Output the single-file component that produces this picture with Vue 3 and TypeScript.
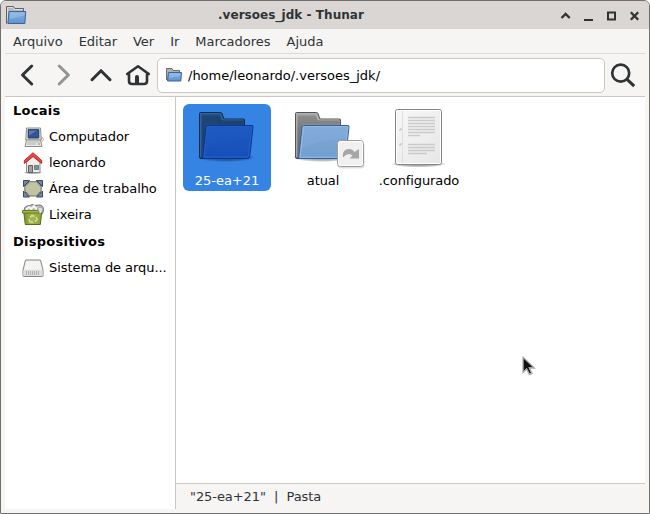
<script setup lang="ts">
const menus: string[] = ['Arquivo', 'Editar', 'Ver', 'Ir', 'Marcadores', 'Ajuda']

interface Place {
  icon: string
  label: string
}

const places: Place[] = [
  { icon: 'computer', label: 'Computador' },
  { icon: 'home', label: 'leonardo' },
  { icon: 'desktop', label: 'Área de trabalho' },
  { icon: 'trash', label: 'Lixeira' },
]
const devices: Place[] = [{ icon: 'drive', label: 'Sistema de arqu...' }]

interface Entry {
  kind: 'folder' | 'link' | 'file'
  name: string
  selected: boolean
}

const entries: Entry[] = [
  { kind: 'folder', name: '25-ea+21', selected: true },
  { kind: 'link', name: 'atual', selected: false },
  { kind: 'file', name: '.configurado', selected: false },
]
const textLines: number[] = [12.5, 15.5, 18.5, 21.5, 24.5, 27.5, 30.5]
</script>

<template>
  <div class="window">
    <svg class="defs" width="0" height="0">
      <defs>
        <linearGradient id="gBack" x1="0" y1="0" x2="0" y2="1">
          <stop offset="0" stop-color="#a3a3a3" /><stop offset="0.35" stop-color="#858585" /><stop offset="1" stop-color="#6b6b6b" />
        </linearGradient>
        <linearGradient id="gFront" x1="0" y1="0" x2="0" y2="1">
          <stop offset="0" stop-color="#7ea8d9" /><stop offset="1" stop-color="#729fcf" />
        </linearGradient>
        <linearGradient id="gBackSel" x1="0" y1="0" x2="1" y2="1">
          <stop offset="0" stop-color="#234f82" /><stop offset="1" stop-color="#1b3f6d" />
        </linearGradient>
        <linearGradient id="gFrontSel" x1="0" y1="0" x2="0" y2="1">
          <stop offset="0" stop-color="#1b58c0" /><stop offset="1" stop-color="#174fb8" />
        </linearGradient>
        <linearGradient id="gSmall" x1="0" y1="0" x2="0" y2="1">
          <stop offset="0" stop-color="#8ab3e2" /><stop offset="1" stop-color="#5f92cf" />
        </linearGradient>
        <linearGradient id="gPage" x1="0" y1="0" x2="1" y2="1">
          <stop offset="0" stop-color="#f8f8f8" /><stop offset="1" stop-color="#e6e6e6" />
        </linearGradient>
        <linearGradient id="gTrash" x1="0" y1="0" x2="1" y2="0">
          <stop offset="0" stop-color="#7f9428" /><stop offset="0.5" stop-color="#a6b94f" /><stop offset="1" stop-color="#8a9e33" />
        </linearGradient>
        <radialGradient id="gShadow">
          <stop offset="0" stop-color="#000" stop-opacity="0.45" /><stop offset="0.7" stop-color="#000" stop-opacity="0.25" /><stop offset="1" stop-color="#000" stop-opacity="0" />
        </radialGradient>
      </defs>
    </svg>

    <header class="titlebar">
      <svg width="22" height="22" viewBox="0 0 22 22">
        <path d="M1.5 19.500V2.500h7l1.300 2h8.700v8" fill="#b9b9b5" stroke="#62625f" />
        <path d="M2.500 18V3.500h5.600l1.300 2h8" fill="none" stroke="#deded9" />
        <path d="M4 7.500h16.700l-.8 12H2.900z" fill="url(#gSmall)" stroke="#3465a4" stroke-linejoin="round" />
        <path d="M5 8.500h14.600l-.3 3-14.700 3.500z" fill="#b4d0ef" opacity=".35" />
      </svg>
      <h1>.versoes_jdk - Thunar</h1>
      <svg width="84" height="15" viewBox="0 0 84 15" fill="none" stroke="#2e3436">
        <path d="M3.500 10 7.600 5.900 11.700 10" stroke-width="2.300" />
        <path d="M26 12h9" stroke-width="2" />
        <path d="M50 4.500h7v7h-7z" stroke-width="2" />
        <path d="M72.800 4.300l7.400 7.400M80.200 4.300l-7.400 7.400" stroke-width="2.300" />
      </svg>
    </header>

    <div class="body">
      <nav class="menubar">
        <span v-for="m in menus" :key="m">{{ m }}</span>
      </nav>

      <div class="toolbar">
        <svg class="nav" width="152" height="42" viewBox="5 54 152 42" fill="none" stroke="#2e3436" stroke-width="3" stroke-linecap="round" stroke-linejoin="round">
          <path d="M31.700 66 22.500 75l9.200 9" />
          <path d="M59.200 66 68.400 75l-9.200 9" stroke="#929595" />
          <path d="M92 79.700 101 70.700 110 79.700" />
          <path d="M127.200 74 138 66.300 148.800 74M129 74.300v6.700q0 3 3 3h12q3 0 3-3v-6.700" stroke-width="2.600" />
          <path d="M135 84v-7q0-2 2-2t2 2v7z" fill="#2e3436" stroke="none" />
        </svg>
        <div class="location">
          <svg width="18" height="16" viewBox="0 0 18 16">
            <path d="M1.500 13V1.500h5.500l1 2h6.500v7" fill="#b0b0ac" stroke="#6b6b68" />
            <path d="M3.500 5.500h13l-.7 8.500H2.500z" fill="url(#gSmall)" stroke="#3465a4" stroke-linejoin="round" />
            <path d="M4.500 6.500h11l-.3 2.500-11 2z" fill="#b4d0ef" opacity=".35" />
          </svg>
          <span>/home/leonardo/.versoes_jdk/</span>
        </div>
        <svg width="40" height="42" viewBox="605 54 40 42" fill="none" stroke="#2e3436" stroke-width="2.700">
          <circle cx="620.700" cy="73.100" r="8.500" />
          <path d="M626.800 79.200 634.200 86.200" stroke-width="3" />
        </svg>
      </div>

      <div class="panes">
        <aside class="sidebar">
          <template v-for="(group, g) in [places, devices]" :key="g">
            <h2>{{ g === 0 ? 'Locais' : 'Dispositivos' }}</h2>
            <div v-for="p in group" :key="p.label" class="place">
              <svg width="24" height="24" viewBox="0 0 24 24">
                <g v-if="p.icon === 'computer'" transform="translate(0 -.5)">
                  <path d="M20 12.500q3 .5 2.300 3l-1.500 2" fill="none" stroke="#b3b5ae" />
                  <path d="M5.500 3.500h14l.8 12H4.700z" fill="#e4e4df" stroke="#8c8e86" />
                  <path d="M7.200 5.200h10.600v8.300H7.200z" fill="#30549a" stroke="#1f3764" />
                  <path d="M8 6h8l-8 5z" fill="#7894c6" opacity=".6" />
                  <path d="M5.500 15.500h14l1.500 6.500h-17z" fill="#e9e9e5" stroke="#8c8e86" />
                  <path d="M6.500 17.500h12M6 19.500h9" stroke="#adafa8" />
                  <path d="M17 19.500h2" stroke="#669a42" />
                </g>
                <g v-else-if="p.icon === 'home'">
                  <ellipse cx="12" cy="21.500" rx="10" ry="1.800" fill="url(#gShadow)" />
                  <path d="M5.500 11 12 5l7 6v10.500h-13.500z" fill="#eeeeec" stroke="#888a85" />
                  <path d="M7.500 14.500h4v7h-4z" fill="#a0a29d" stroke="#5c6056" />
                  <path d="M13.500 14.500h4v4h-4z" fill="#7b96b5" stroke="#73776f" />
                  <path d="M3.300 12.500V9.500L12 1.700l8.700 7.800v3L12 5.600z" fill="#ef4545" stroke="#b01010" stroke-width=".8" stroke-linejoin="round" />
                </g>
                <g v-else-if="p.icon === 'desktop'">
                  <path d="M4.500 5.500h15v13h-15z" fill="#c3c7aa" stroke="#555750" />
                  <path d="M2.500 3.500h6l-6 6zM21.500 3.500h-6l6 6zM2.500 20h6l-6-6zM21.500 20h-6l6-6z" fill="#7289ab" stroke="#364968" stroke-linejoin="round" />
                  <path d="M8 4.700h8q1.500 3.500 4.200 4.300v5.500q-3 1-4.200 4.500H8q-1.200-3.500-4.200-4.500V9Q6.500 8.200 8 4.700z" fill="#c0c4a2" stroke="#6b6e5c" />
                </g>
                <g v-else-if="p.icon === 'trash'">
                  <path d="M3 8q0-4.500 3-5l3-.5 2-1 3 1 4-.5q5 0 4.500 6l-1.500 3H3z" fill="#b9bab7" stroke="#73756f" />
                  <path d="M5 6.500l3-2.500 2 2 3-3 2.500 3 3-2" fill="none" stroke="#f4f4f4" stroke-width="2" />
                  <path d="M2.700 8.500h18.100l-1.500 13h-15z" fill="url(#gTrash)" stroke="#596b18" stroke-linejoin="round" />
                  <path d="M1.500 7.500h17.500v2.500h-17.500z" fill="#a3b54b" stroke="#6b7d24" />
                  <path d="M16.500 5q5-2.500 5.500 1.500 0 2.500-3 4.500l-1.500-3z" fill="#dcdddb" stroke="#8b8d88" stroke-width=".8" />
                  <path d="M9 14.500l2-2 2.500 1M15 14l1.200 2.500L14 18.500M12 19H9l-1-3" fill="none" stroke="#d3df9b" stroke-width="1.500" />
                </g>
                <g v-else transform="translate(0 -.5)">
                  <path d="M4.500 4.500h15l2.500 10v5.500q0 1-1 1H3q-1 0-1-1v-5.500z" fill="#ececeb" stroke="#858783" stroke-linejoin="round" />
                  <path d="M2.500 14.500h19v6h-19z" fill="#dededd" />
                  <path d="M5.500 5.500h13l2 8.500h-17z" fill="#f4f4f3" />
                  <path d="M5 17.500h13" stroke="#b0b1af" stroke-width="4" stroke-dasharray="1 1" />
                </g>
              </svg>
              <span>{{ p.label }}</span>
            </div>
          </template>
        </aside>

        <section class="main">
          <div class="files">
            <div v-for="e in entries" :key="e.name" class="file" :class="{ selected: e.selected }">
              <svg width="80" height="64" viewBox="0 0 80 64">
                <g v-if="e.kind === 'file'">
                  <ellipse cx="39.500" cy="56" rx="28" ry="3.500" fill="url(#gShadow)" />
                  <rect x="16.500" y="1.500" width="46" height="55" rx="2" fill="url(#gPage)" stroke="#858585" />
                  <rect x="17.500" y="2.500" width="44" height="53" rx="1" fill="none" stroke="#fff" />
                  <path d="M23.500 3v52" stroke="#dedede" />
                  <path d="M20 22h2v-2M20 37h2v-2" fill="none" stroke="#bbb" />
                  <g transform="translate(0 -3)">
                    <path v-for="y in textLines" :key="y" :d="`M29 ${y}h${y === 30.5 ? 12 : 27}`" stroke="#cacaca" stroke-width="1.600" />
                    <path d="M29 39.500h27M29 42.500h27M29 45.500h27M29 48.500h19" stroke="#cacaca" stroke-width="1.600" />
                  </g>
                </g>
                <g v-else>
                  <ellipse cx="39" cy="49.500" rx="30" ry="4.500" fill="url(#gShadow)" />
                  <path d="M14 50.500q-1.500 0-1.500-1.500V5.500q0-1 1-1h20q1 0 1.500 1l1.500 4.500q.5 1 1.500 1h18.500q1 0 1 1v28q0 10.500-4 10.500z" :fill="e.selected ? 'url(#gBackSel)' : 'url(#gBack)'" :stroke="e.selected ? '#122c51' : '#535353'" />
                  <path d="M13.700 49V5.700h19.600l2.200 6.300H56" fill="none" :stroke="e.selected ? '#3569a4' : '#b7b7b7'" />
                  <path d="M15 9h18M15 11h19M15 13h41M15 15h41M15 17h4M15 19h4M15 21h4M15 23h4M15 25h4M15 27h4M15 29h3M15 31h3M15 33h3M15 35h3M15 37h3M15 39h2M15 41h2" :stroke="e.selected ? '#163759' : '#5f5f5f'" opacity=".5" />
                  <path d="M20.500 17.500h44.500q1.200 0 1 1.300l-3.200 29.500q-.3 2.200-2 2.200H16.500q-1 0-.8-1l3.300-30.500q.2-1.500 1.500-1.500z" :fill="e.selected ? 'url(#gFrontSel)' : 'url(#gFront)'" :stroke="e.selected ? '#0b3590' : '#2f62a4'" />
                  <path d="M20.500 18.700h44.200l-3.200 29.500q-.2 1-1 1H17z" fill="none" :stroke="e.selected ? '#2560c8' : '#98bce4'" />
                  <path d="M20.500 19.500h43.200l-1.300 11q-22 0-43.500 10z" :fill="e.selected ? '#2763c8' : '#a3c5ed'" opacity=".15" />
                </g>
              </svg>
              <svg v-if="e.kind === 'link'" class="emblem" width="30" height="31" viewBox="0 0 30 31">
                <rect x="1.500" y="3" width="27" height="26.500" rx="4" fill="#000" opacity=".12" />
                <rect x="1.500" y="1.500" width="26" height="26" rx="3" fill="#f0f0f0" stroke="#9b9b9b" />
                <rect x="2.500" y="2.500" width="24" height="24" rx="2" fill="none" stroke="#fff" />
                <path d="M7 18.500C6 13 9 10 13 10q3.500 0 5.500 3L23 10v9.500h-9.500l3-3Q12 12.500 7 18.500z" fill="#a6a6a6" />
              </svg>
              <span>{{ e.name }}</span>
            </div>
          </div>
          <footer class="status">"25-ea+21" &nbsp;|&nbsp; Pasta</footer>
        </section>
      </div>
    </div>

    <svg class="pointer" width="14" height="22" viewBox="0 0 14 22">
      <path d="M1 1v15.500l3.700-3.300 2.700 5.500 2.800-1.300-2.600-5.200h5z" fill="#fff" stroke="#aaa" stroke-width="1.200" />
      <path d="M1.600 2.600V15l3.200-3 2.900 5.600 1.300-.6L6.400 11.300h4.400z" fill="#111" />
    </svg>
  </div>
</template>

<style>
body {
  background: #fff;
}
</style>

<style scoped>
.window {
  box-sizing: border-box;
  position: relative;
  display: flex;
  flex-direction: column;
  width: 650px;
  height: 514px;
  border: 1px solid #716e6b;
  border-radius: 6px 6px 1px 1px;
  overflow: hidden;
  background: #f6f5f4;
  color: #2e3436;
  font-family: 'DejaVu Sans', sans-serif;
  font-size: 13px;
  line-height: 16px;
  white-space: nowrap;
}
svg {
  display: block;
  flex: none;
}
.defs {
  position: absolute;
}
h1,
h2 {
  margin: 0;
  font-size: inherit;
  font-weight: bold;
}
.titlebar {
  display: flex;
  align-items: center;
  flex: none;
  height: 28px;
  padding: 0 7px 0 4px;
  background: #dad6d3;
}
.titlebar h1 {
  flex: 1;
  padding-right: 3px;
  text-align: center;
  font-size: 12px;
  letter-spacing: 0.05px;
}
.body {
  display: flex;
  flex: 1;
  flex-direction: column;
  min-height: 0;
  padding: 0 4px 4px;
}
.menubar {
  display: flex;
  flex: none;
  gap: 16px;
  height: 24px;
  padding-left: 8px;
  border-bottom: 1px solid #dcdad7;
  line-height: 25px;
  letter-spacing: -0.02px;
}
.toolbar {
  display: flex;
  align-items: center;
  flex: none;
  height: 42px;
  border-bottom: 1px solid #cdc7c2;
}
.location {
  box-sizing: border-box;
  display: flex;
  align-items: center;
  flex: 1;
  gap: 5px;
  height: 35px;
  padding-left: 7px;
  border: 1px solid #cdc7c2;
  border-radius: 5px;
  background: #fff;
  color: #000;
}
.location span {
  padding-top: 1px;
}
.panes {
  display: flex;
  flex: 1;
  min-height: 0;
}
.sidebar {
  box-sizing: border-box;
  width: 171px;
  flex: none;
  border-right: 1px solid #cdc7c2;
  background: #fff;
  color: #000;
}
.sidebar h2 {
  height: 27px;
  padding-left: 8px;
  line-height: 28px;
  letter-spacing: 0.25px;
}
.place {
  display: flex;
  align-items: center;
  gap: 4px;
  height: 26px;
  padding-left: 16px;
  letter-spacing: -0.07px;
}
.main {
  display: flex;
  flex: 1;
  flex-direction: column;
}
.files {
  display: flex;
  flex: 1;
  gap: 8px;
  padding: 7px;
  background: #fff;
  color: #000;
}
.file {
  position: relative;
  display: flex;
  flex-direction: column;
  align-items: center;
  box-sizing: border-box;
  width: 88px;
  height: 87px;
  padding-top: 4px;
  border-radius: 6px;
}
.file span {
  line-height: 17px;
  letter-spacing: -0.1px;
}
.file.selected span {
  letter-spacing: 0;
}
.selected {
  background: #3584e4;
  color: #fff;
}
.emblem {
  position: absolute;
  left: 57px;
  top: 35px;
}
.status {
  height: 25px;
  padding-left: 14px;
  border-top: 1px solid #cdc7c2;
  line-height: 25px;
  letter-spacing: -0.07px;
}
.pointer {
  position: absolute;
  left: 521px;
  top: 355px;
}
</style>
